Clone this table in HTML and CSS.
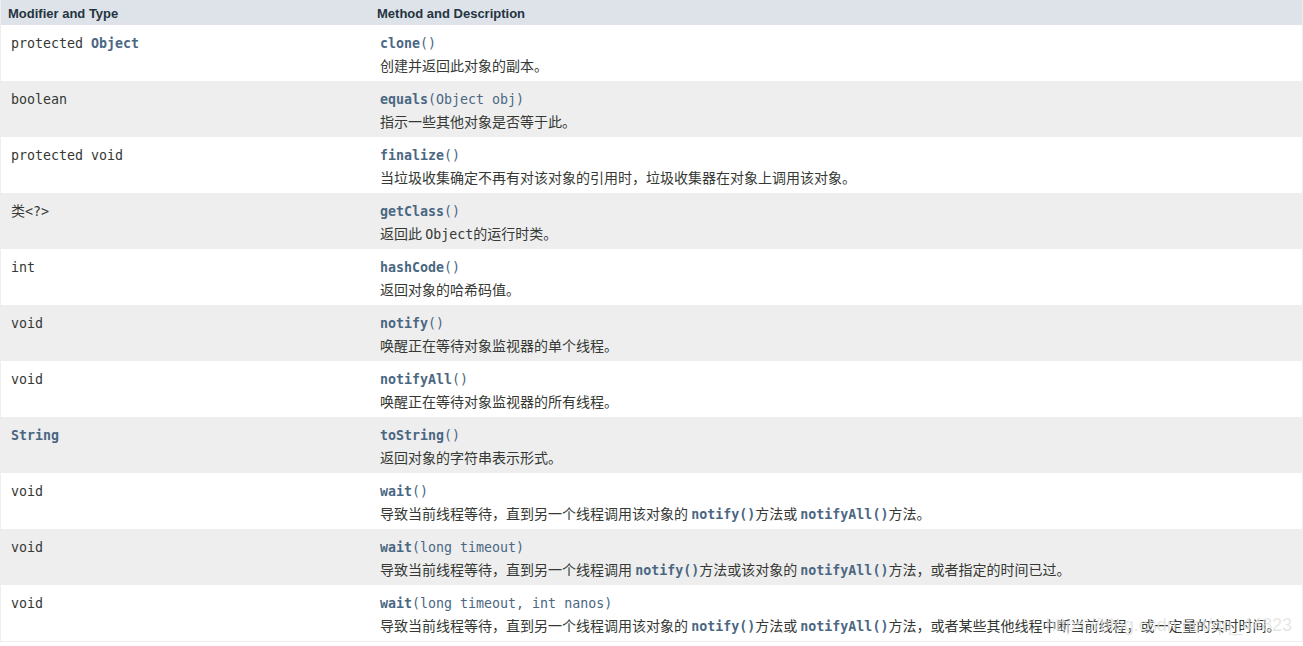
FILE: index.html
```html
<!DOCTYPE html>
<html lang="zh">
<head>
<meta charset="utf-8">
<title>Object methods</title>
<link rel="stylesheet" href="styles.css">
</head>
<body>
<div class="summary">
  <div class="row head">
    <div class="th c1h">Modifier and Type</div>
    <div class="th c2h">Method and Description</div>
  </div>

  <div class="row alt">
    <div class="cell"><div class="sig"><code>protected <a class="lk">Object</a></code></div></div>
    <div class="cell"><div class="sig"><code><a class="mn">clone</a><span class="pr">()</span></code></div><div class="desc">创建并返回此对象的副本。</div></div>
  </div>

  <div class="row">
    <div class="cell"><div class="sig"><code>boolean</code></div></div>
    <div class="cell"><div class="sig"><code><a class="mn">equals</a><span class="pr">(Object obj)</span></code></div><div class="desc">指示一些其他对象是否等于此。</div></div>
  </div>

  <div class="row alt">
    <div class="cell"><div class="sig"><code>protected void</code></div></div>
    <div class="cell"><div class="sig"><code><a class="mn">finalize</a><span class="pr">()</span></code></div><div class="desc">当垃圾收集确定不再有对该对象的引用时，垃圾收集器在对象上调用该对象。</div></div>
  </div>

  <div class="row">
    <div class="cell"><div class="sig"><span class="cjk">类</span><code>&lt;?&gt;</code></div></div>
    <div class="cell"><div class="sig"><code><a class="mn">getClass</a><span class="pr">()</span></code></div><div class="desc">返回此 <code>Object</code>的运行时类。</div></div>
  </div>

  <div class="row alt">
    <div class="cell"><div class="sig"><code>int</code></div></div>
    <div class="cell"><div class="sig"><code><a class="mn">hashCode</a><span class="pr">()</span></code></div><div class="desc">返回对象的哈希码值。</div></div>
  </div>

  <div class="row">
    <div class="cell"><div class="sig"><code>void</code></div></div>
    <div class="cell"><div class="sig"><code><a class="mn">notify</a><span class="pr">()</span></code></div><div class="desc">唤醒正在等待对象监视器的单个线程。</div></div>
  </div>

  <div class="row alt">
    <div class="cell"><div class="sig"><code>void</code></div></div>
    <div class="cell"><div class="sig"><code><a class="mn">notifyAll</a><span class="pr">()</span></code></div><div class="desc">唤醒正在等待对象监视器的所有线程。</div></div>
  </div>

  <div class="row">
    <div class="cell"><div class="sig"><code><a class="lk">String</a></code></div></div>
    <div class="cell"><div class="sig"><code><a class="mn">toString</a><span class="pr">()</span></code></div><div class="desc">返回对象的字符串表示形式。</div></div>
  </div>

  <div class="row alt">
    <div class="cell"><div class="sig"><code>void</code></div></div>
    <div class="cell"><div class="sig"><code><a class="mn">wait</a><span class="pr">()</span></code></div><div class="desc">导致当前线程等待，直到另一个线程调用该对象的 <code class="ref">notify()</code>方法或 <code class="ref">notifyAll()</code>方法。</div></div>
  </div>

  <div class="row">
    <div class="cell"><div class="sig"><code>void</code></div></div>
    <div class="cell"><div class="sig"><code><a class="mn">wait</a><span class="pr">(long timeout)</span></code></div><div class="desc">导致当前线程等待，直到另一个线程调用 <code class="ref">notify()</code>方法或该对象的 <code class="ref">notifyAll()</code>方法，或者指定的时间已过。</div></div>
  </div>

  <div class="row alt">
    <div class="cell"><div class="sig"><code>void</code></div></div>
    <div class="cell"><div class="sig"><code><a class="mn">wait</a><span class="pr">(long timeout, int nanos)</span></code></div><div class="desc">导致当前线程等待，直到另一个线程调用该对象的 <code class="ref">notify()</code>方法或 <code class="ref">notifyAll()</code>方法，或者某些其他线程中断当前线程，或一定量的实时时间。</div></div>
  </div>
  <div class="watermark">https://blog.csdn.net/qq_44823</div>
</div>
</body>
</html>
```

FILE: styles.css
```css
html, body {
  margin: 0;
  padding: 0;
  background: #ffffff;
}

body {
  font-family: "Noto Sans CJK SC", "Noto Sans", sans-serif;
  font-size: 14px;
  color: #353833;
}

.summary {
  position: relative;
  width: 1303px;
  box-sizing: border-box;
  border-left: 1px solid #eeeeee;
  border-right: 1px solid #eeeeee;
  border-bottom: 1px solid #eeeeee;
}

.row {
  display: grid;
  grid-template-columns: 369px 1fr;
  height: 56px;
  overflow: hidden;
  background: #eeeeef;
}

.row.alt {
  background: #ffffff;
}

.row.head {
  height: 25px;
  background: #dee3e9;
}

.th {
  font-family: "Liberation Sans", Arial, sans-serif;
  font-weight: bold;
  font-size: 13px;
  line-height: 15px;
  color: #253441;
  padding: 6px 3px 4px 7px;
  white-space: nowrap;
}

.cell {
  padding: 7px 3px 0 10px;
}

.sig {
  height: 20px;
  line-height: 20px;
  white-space: nowrap;
}

code {
  font-family: "DejaVu Sans Mono", monospace;
  font-size: 13.3px;
  line-height: 1;
  color: #353833;
}

.cjk {
  font-family: "Noto Sans CJK SC", sans-serif;
  font-size: 14px;
  line-height: 1;
}

.lk, .mn {
  color: #4a6782;
  font-weight: bold;
  text-decoration: none;
}

.pr {
  color: #4a6782;
}

.desc {
  margin-top: 3px;
  height: 20px;
  line-height: 20px;
  font-size: 14px;
  color: #353833;
  white-space: nowrap;
}

.desc code.ref {
  color: #4a6782;
  font-weight: bold;
}

.watermark {
  position: absolute;
  right: 10px;
  top: 615px;
  font-family: "Liberation Sans", Arial, sans-serif;
  font-size: 18px;
  line-height: 20px;
  color: rgba(222, 222, 222, 0.75);
  pointer-events: none;
  white-space: nowrap;
}
```
